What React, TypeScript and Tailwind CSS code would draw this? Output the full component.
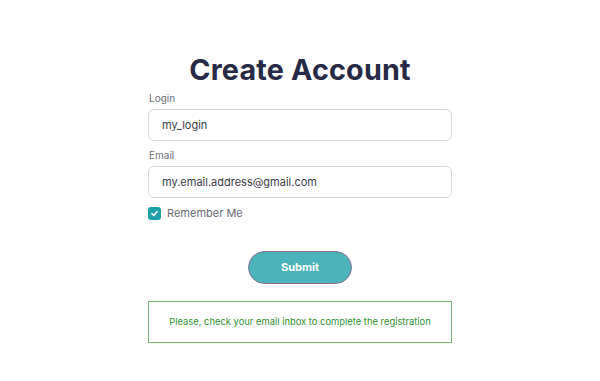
import React from "react";

export default function App() {
  return (
    <div className="min-h-[381px] w-full bg-white">
      <div className="mx-auto flex w-[304px] flex-col pt-[50px] font-['Inter','Open_Sans',sans-serif]">
        <h1 className="text-center text-[28.7px] font-bold leading-[40px] tracking-[0.2px] text-[#262a46]">
          Create Account
        </h1>
        <label className="mt-[1px] pl-px text-[10px] leading-[14px] text-[#6e6e7a]">Login</label>
        <div className="mt-[4px] flex h-[32px] items-center rounded-[6px] border border-[#d6d6da] px-[13px] text-[11px] text-[#3b3b48]">
          my_login
        </div>
        <label className="mt-[7px] pl-px text-[10px] leading-[14px] text-[#6e6e7a]">Email</label>
        <div className="mt-[4px] flex h-[32px] items-center rounded-[6px] border border-[#d6d6da] px-[13px] text-[11px] text-[#3b3b48]">
          my.email.address@gmail.com
        </div>
        <div className="mt-[6px] flex h-[18px] items-center gap-[6px]">
          <span className="flex h-[13px] w-[13px] items-center justify-center rounded-[3px] bg-[#1fa0a6]">
            <svg width="9" height="9" viewBox="0 0 12 12" fill="none">
              <path d="M2.5 6.2 L5 8.5 L9.5 3.5" stroke="white" strokeWidth="2" strokeLinecap="round" strokeLinejoin="round" />
            </svg>
          </span>
          <span className="text-[11px] text-[#6a6a78]">Remember Me</span>
        </div>
        <div className="mt-[29px] flex justify-center">
          <button className="h-[33px] w-[104px] rounded-full border border-[#8a7194] bg-[#4bb3ba] text-[11px] font-bold text-white">
            Submit
          </button>
        </div>
        <div className="mt-[17px] flex h-[42px] items-center justify-center border border-[#74b874] text-[9.4px] text-[#2f8f2f]">
          Please, check your email inbox to complete the registration
        </div>
      </div>
    </div>
  );
}
